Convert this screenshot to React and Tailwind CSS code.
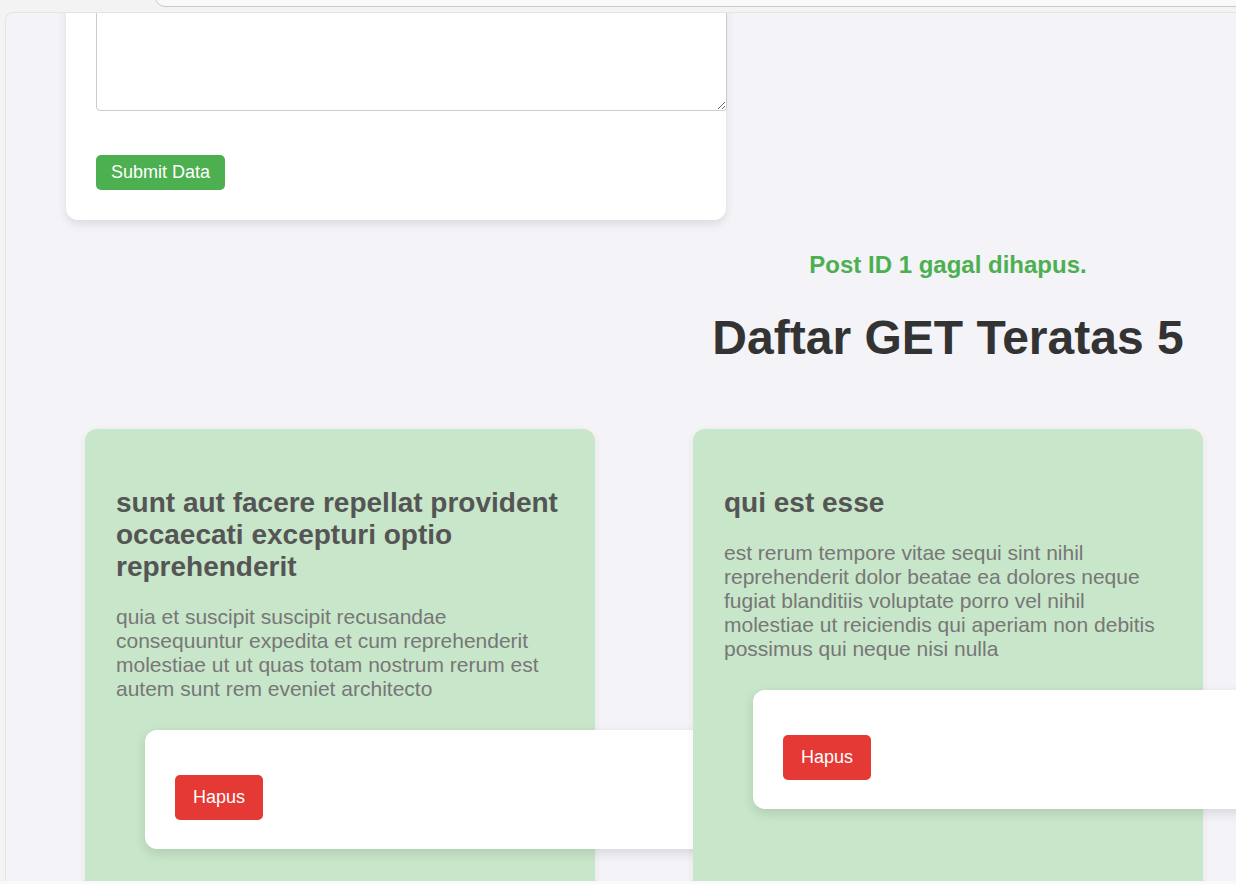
const posts = [
  {
    id: 1,
    title: 'sunt aut facere repellat provident occaecati excepturi optio reprehenderit',
    body: 'quia et suscipit suscipit recusandae consequuntur expedita et cum reprehenderit molestiae ut ut quas totam nostrum rerum est autem sunt rem eveniet architecto',
  },
  {
    id: 2,
    title: 'qui est esse',
    body: 'est rerum tempore vitae sequi sint nihil reprehenderit dolor beatae ea dolores neque fugiat blanditiis voluptate porro vel nihil molestiae ut reiciendis qui aperiam non debitis possimus qui neque nisi nulla',
  },
]

function PostCard({ post }) {
  return (
    <div className="w-[510px] h-[470px] shrink-0 rounded-[12px] bg-[#c8e6c9] pl-[31px] pr-[29px] pt-[58px] shadow-[0_2px_8px_rgba(0,0,0,0.06)]">
      <h3 className="text-[28px] leading-[32px] font-bold text-[#555]">{post.title}</h3>
      <p className="mt-[22px] text-[21px] leading-[24px] text-[#777]">{post.body}</p>
      <div className="mt-[29px] ml-[29px] w-[620px] rounded-[12px] bg-white pt-[45px] pb-[29px] pl-[30px] shadow-[0_4px_12px_rgba(0,0,0,0.12)]">
        <button className="h-[45px] w-[88px] rounded-[5px] bg-[#e53935] text-[18px] text-white">Hapus</button>
      </div>
    </div>
  )
}

export default function App() {
  return (
    <div className="w-[1236px] h-[884px] flex flex-col overflow-hidden bg-[#f3f3f3] font-['Liberation_Sans',Arial,sans-serif]">
      <div className="relative h-[12px] shrink-0">
        <div className="absolute left-[155px] top-[-20px] right-[-10px] h-[27px] rounded-bl-[10px] border border-[#c9c9c9] bg-[#f9f9f9]" />
      </div>

      <div className="flex-1 ml-[5px] overflow-hidden rounded-tl-[8px] border-l border-t border-[#e4e4e4] bg-[#f4f3f8]">
        <div className="ml-[60px] mt-[-82px] w-[660px] rounded-[12px] bg-white p-[30px] shadow-[0_4px_10px_rgba(0,0,0,0.1)]">
          <textarea
            readOnly
            className="block h-[150px] w-[631px] rounded-[4px] border border-[#ccc] bg-white outline-none"
          />
          <button className="mt-[44px] h-[35px] w-[129px] rounded-[5px] bg-[#4caf50] text-[18px] text-white">
            Submit Data
          </button>
        </div>

        <div className="ml-[620px] w-[644px] text-center whitespace-nowrap">
          <p className="mt-[31px] text-[24px] leading-[28px] font-bold text-[#4caf50]">Post ID 1 gagal dihapus.</p>
          <h2 className="mt-[31px] text-[48px] leading-[55px] font-bold text-[#333]">Daftar GET Teratas 5</h2>
        </div>

        <div className="ml-[79px] mt-[64px] flex gap-[98px]">
          {posts.map(p => <PostCard key={p.id} post={p} />)}
        </div>
      </div>

      <div className="h-[3px] shrink-0 bg-[#f9f9f9]" />
    </div>
  )
}
